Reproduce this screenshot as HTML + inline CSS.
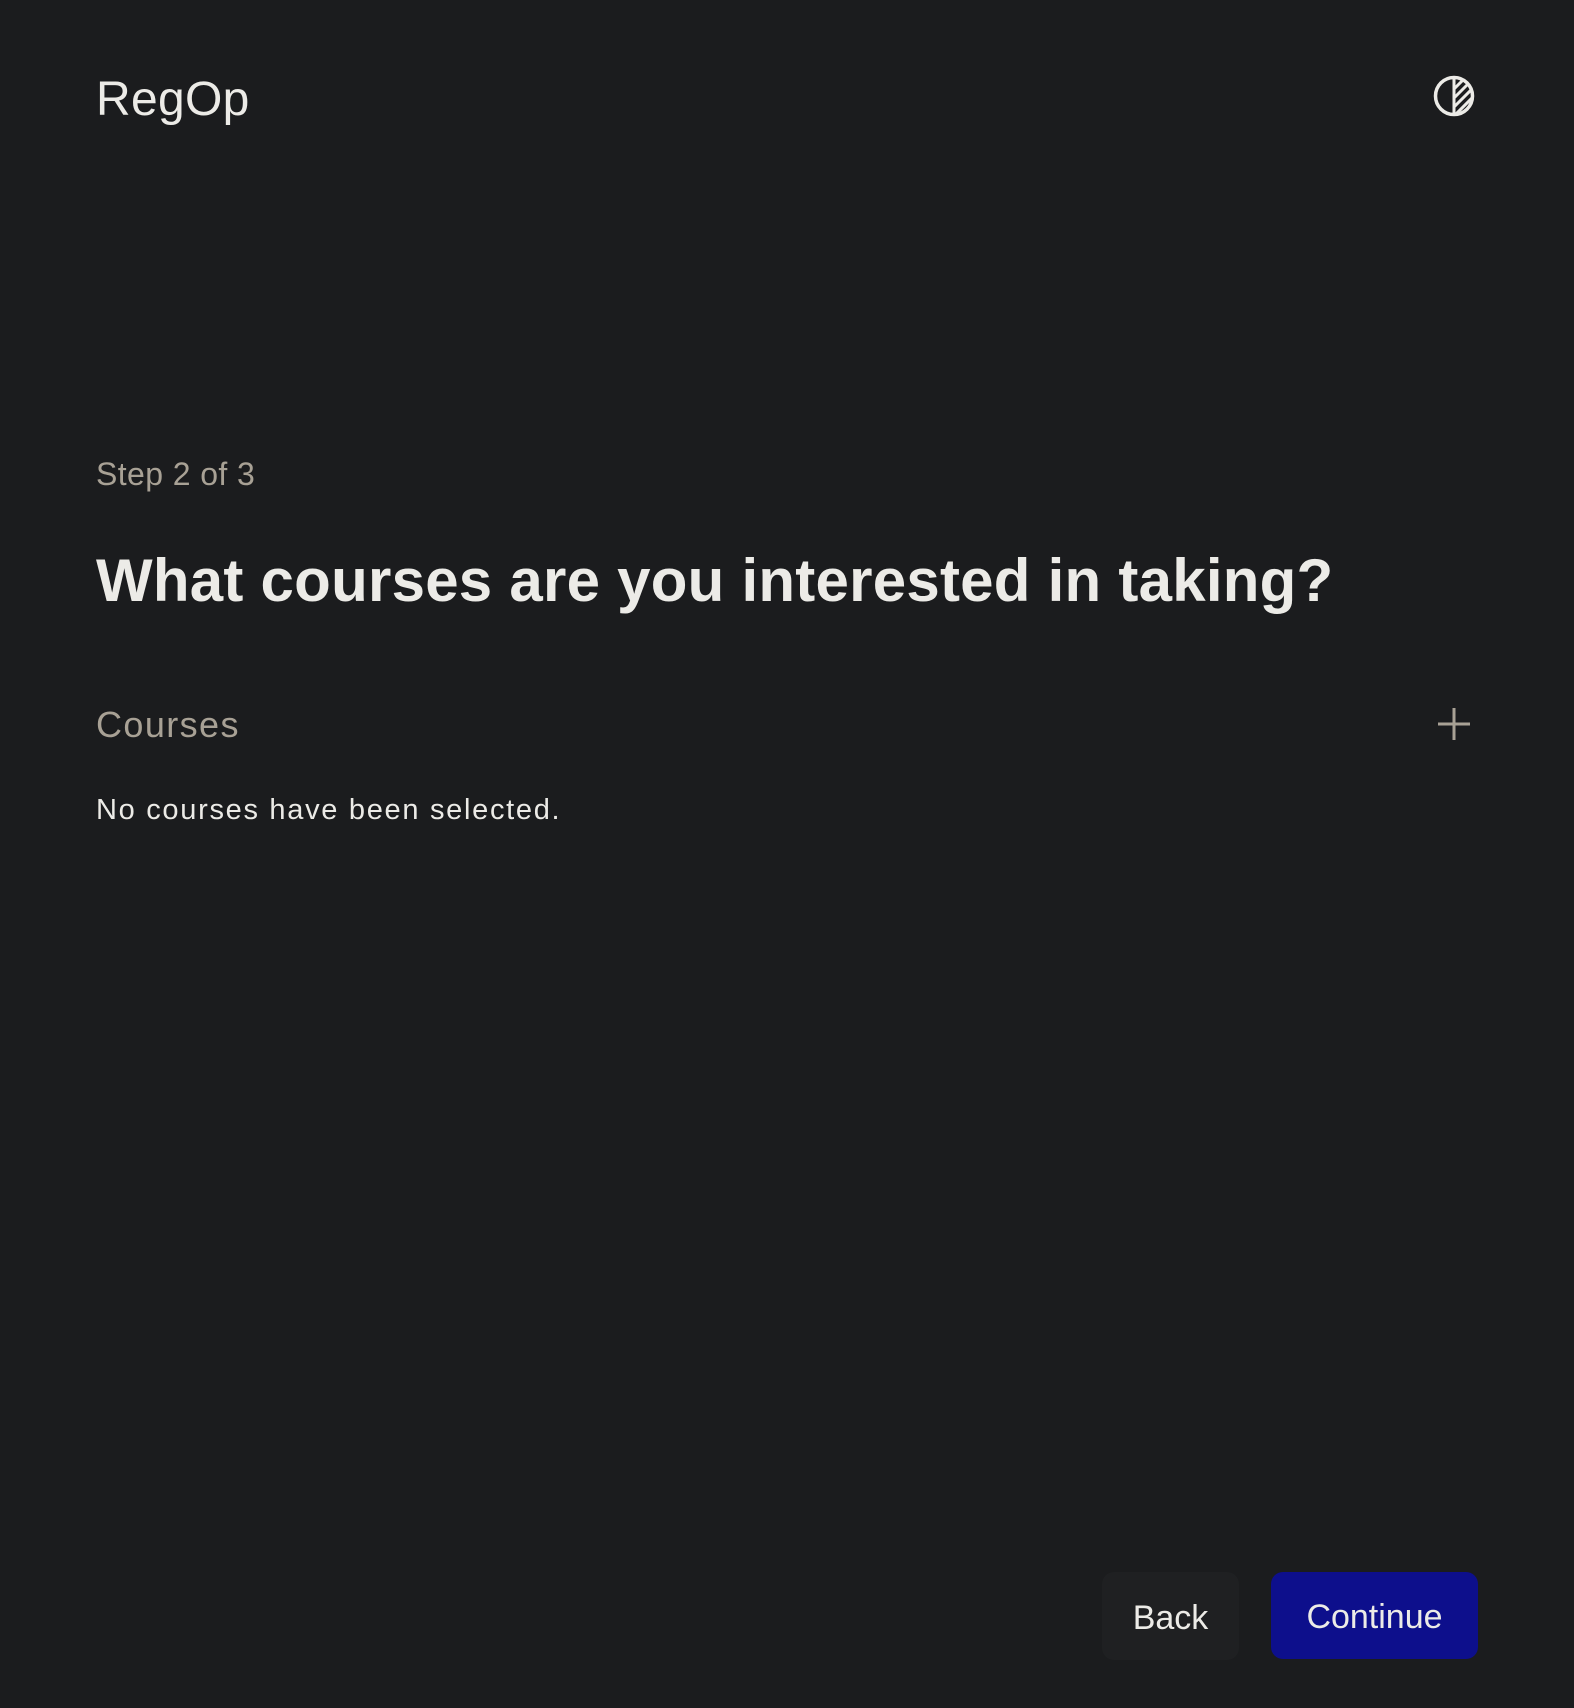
<!DOCTYPE html>
<html><head><style>
html,body{margin:0;padding:0;background:#1b1c1e;width:1574px;height:1708px;overflow:hidden;font-family:"Liberation Sans",sans-serif;}
.a{position:absolute;white-space:nowrap;line-height:1;}
</style></head><body>
<div class="a" style="left:96px;top:76px;font-size:48px;color:#ecebe7;letter-spacing:0.3px">RegOp</div>
<svg class="a" style="left:1430px;top:72px" width="48" height="48" viewBox="0 0 48 48">
<circle cx="24" cy="24" r="18.5" fill="none" stroke="#ecebe7" stroke-width="3.5"/>
<line x1="24" y1="6" x2="24" y2="42" stroke="#ecebe7" stroke-width="3"/>
<clipPath id="c"><circle cx="24" cy="24" r="18"/></clipPath>
<g clip-path="url(#c)" stroke="#ecebe7" stroke-width="3">
<line x1="24" y1="17" x2="34" y2="7"/><line x1="24" y1="26" x2="40" y2="10"/><line x1="24" y1="35" x2="44" y2="15"/><line x1="24" y1="44" x2="44" y2="24"/>
</g></svg>
<div class="a" style="left:96px;top:458px;font-size:32px;color:#a8a195;letter-spacing:0.4px">Step 2 of 3</div>
<div class="a" style="left:96px;top:551px;font-size:60px;font-weight:bold;color:#ecebe7;letter-spacing:0.25px">What courses are you interested in taking?</div>
<div class="a" style="left:96px;top:707px;font-size:36px;color:#a8a195;letter-spacing:1.4px">Courses</div>
<svg class="a" style="left:1436px;top:706px" width="36" height="36"><path d="M18 2V34M2 18H34" stroke="#a8a195" stroke-width="3"/></svg>
<div class="a" style="left:96px;top:796px;font-size:29px;color:#ecebe7;letter-spacing:1.7px">No courses have been selected.</div>
<div class="a" style="left:1102px;top:1572px;width:137px;height:88px;border-radius:12px;background:#1f2022;color:#ecebe7;font-size:34px;display:flex;align-items:center;justify-content:center;padding-top:3px;box-sizing:border-box">Back</div>
<div class="a" style="left:1271px;top:1572px;width:207px;height:87px;border-radius:12px;background:#0d0f8c;color:#ecebe7;font-size:34px;display:flex;align-items:center;justify-content:center;padding-top:3px;box-sizing:border-box">Continue</div>
</body></html>
